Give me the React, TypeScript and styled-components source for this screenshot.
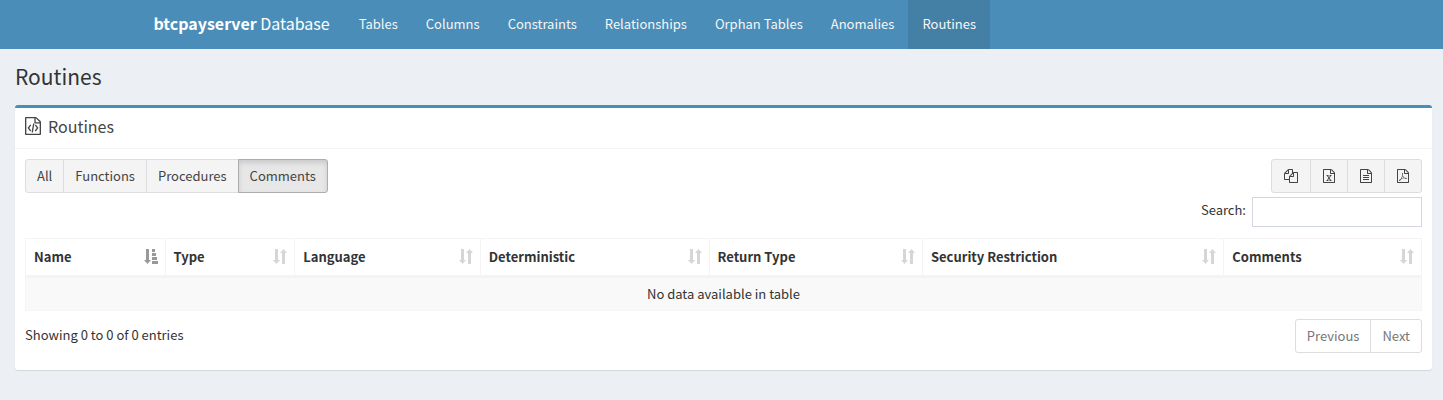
import React from "react";
import styled, { createGlobalStyle, css } from "styled-components";

const GlobalStyle = createGlobalStyle`
  *, *::before, *::after { box-sizing: border-box; }
  body {
    margin: 0;
    background: #ecf0f5;
    color: #333;
    font-family: "Source Sans Pro", "Noto Sans CJK SC", "Noto Sans", sans-serif;
    font-size: 13px;
    line-height: 20px;
  }
  button, input { font: inherit; color: inherit; }
`;

const Navbar = styled.header`
  background: #4a8db8;
  color: #fff;
`;

const NavInner = styled.div`
  display: flex;
  max-width: 1170px;
  margin: 0 auto;
  padding: 0 2px;
`;

const Brand = styled.a`
  padding: 13px 15px 16px;
  color: #fff;
  font-size: 16px;
  text-decoration: none;
  white-space: nowrap;
`;

const NavList = styled.nav`
  display: flex;
`;

const NavLink = styled.a<{ $active?: boolean }>`
  padding: 14px 14px 15px;
  color: #f6f6f6;
  text-decoration: none;
  white-space: nowrap;
  ${({ $active }) => $active && css`background: #447fa6;`}
`;

const Content = styled.main`
  padding: 14px 11px 15px 15px;
`;

const PageTitle = styled.h1`
  margin: 0 0 16px;
  font-size: 21px;
  font-weight: 400;
  line-height: 26px;
`;

const Box = styled.section`
  background: #fff;
  border-top: 3px solid #4a8db8;
  border-radius: 3px;
  box-shadow: 0 1px 1px rgba(0, 0, 0, 0.1);
`;

const BoxHeader = styled.header`
  display: flex;
  align-items: center;
  gap: 7px;
  padding: 8px 10px 12px;
  border-bottom: 1px solid #f4f4f4;
  color: #444;
`;

const BoxTitle = styled.h3`
  margin: 0;
  font-size: 16px;
  font-weight: 400;
  line-height: 20px;
`;

const BoxBody = styled.div`
  padding: 10px 10px 17px;
`;

const Toolbar = styled.div`
  display: flex;
  justify-content: space-between;
`;

const ButtonGroup = styled.div`
  display: flex;
`;

const Button = styled.button<{ $active?: boolean }>`
  display: flex;
  align-items: center;
  height: 34px;
  padding: 6px 11px;
  border: 1px solid #ddd;
  background: #f4f4f4;
  color: #444;
  white-space: nowrap;
  & + & { margin-left: -1px; }
  &:first-child { border-radius: 3px 0 0 3px; }
  &:last-child { border-radius: 0 3px 3px 0; }
  ${({ $active }) =>
    $active &&
    css`
      z-index: 1;
      border-color: #adadad;
      background: #e7e7e7;
      box-shadow: inset 0 3px 5px rgba(0, 0, 0, 0.125);
    `}
`;

const IconButton = styled(Button)`
  padding: 6px 12px;
`;

const PageButton = styled(Button)`
  background: #fff;
  color: #777;
`;

const SearchLabel = styled.label`
  display: flex;
  justify-content: flex-end;
  align-items: flex-start;
  gap: 6px;
  margin: 4px 0 11px;
  line-height: 26px;
`;

const SearchInput = styled.input`
  width: 170px;
  height: 30px;
  padding: 5px 10px;
  border: 1px solid #d2d6de;
  background: #fff;
`;

const Table = styled.table`
  width: 100%;
  table-layout: fixed;
  border-collapse: separate;
  border-spacing: 0;
  border: 1px solid #f4f4f4;
`;

const HeadCell = styled.th<{ $width: string }>`
  width: ${({ $width }) => $width};
  padding: 8px 6px 8px 8px;
  border-right: 1px solid #f4f4f4;
  border-bottom: 3px solid #f4f4f4;
  text-align: left;
  font-weight: 700;
  white-space: nowrap;
  &:last-child { border-right: 0; }
`;

const HeadContent = styled.div`
  display: flex;
  align-items: center;
  justify-content: space-between;
`;

const EmptyCell = styled.td`
  padding: 6px 8px;
  background: #f9f9f9;
  text-align: center;
`;

const Footer = styled.footer`
  display: flex;
  justify-content: space-between;
  align-items: flex-start;
  padding-top: 8px;
`;

const Summary = styled.span`
  line-height: 32px;
`;

const filePage =
  "M1468 380q28 28 48 76t20 88v1152q0 40-28 68t-68 28h-1344q-40 0-68-28t-28-68v-1600q0-40 28-68t68-28h896q40 0 88 20t76 48zm-444-244v376h376q-10-29-22-41l-313-313q-12-12-41-22zm384 1528v-1024h-416q-40 0-68-28t-28-68v-416h-768v1536h1280z";

const icons = {
  code: filePage +
    "m-928-896q8-11 21-12.5t24 6.5l51 38q11 8 12.5 21t-6.5 24l-182 243 182 243q8 11 6.5 24t-12.5 21l-51 38q-11 8-24 6.5t-21-12.5l-226-301q-14-19 0-38zm802 301q14 19 0 38l-226 301q-8 11-21 12.5t-24-6.5l-51-38q-11-8-12.5-21t6.5-24l182-243-182-243q-8-11-6.5-24t12.5-21l51-38q11-8 24-6.5t21 12.5zm-620 461q-13-2-20.5-13t-5.5-24l138-831q2-13 13-20.5t24-5.5l63 10q13 2 20.5 13t5.5 24l-138 831q-2 13-13 20.5t-24 5.5z",
  text: filePage +
    "m-1024-864q0-14 9-23t23-9h704q14 0 23 9t9 23v64q0 14-9 23t-23 9h-704q-14 0-23-9t-9-23v-64zm736 224q14 0 23 9t9 23v64q0 14-9 23t-23 9h-704q-14 0-23-9t-9-23v-64q0-14 9-23t23-9h704zm0 256q14 0 23 9t9 23v64q0 14-9 23t-23 9h-704q-14 0-23-9t-9-23v-64q0-14 9-23t23-9h704z",
  excel: filePage +
    "m-979-234v106h281v-106h-75l103-161q5-7 10-16.5t7.5-13.5 3.5-4h2q1 4 5 10 2 4 4.5 7.5t6 8 6.5 8.5l107 161h-76v106h291v-106h-68l-192-273 195-282h67v-107h-279v107h74l-103 159q-4 7-10 16.5t-9 13.5l-2 3h-2q-1-4-5-10-6-11-17-23l-106-159h76v-107h-290v107h68l189 272-194 283h-68z",
  pdf: filePage +
    "m-514-593q33 26 84 56 59-7 117-7 147 0 177 49 16 22 2 52 0 1-1 2l-2 2v1q-6 38-71 38-48 0-115-20t-130-53q-221 24-392 83-153 262-242 262-15 0-28-7l-24-12q-1-1-6-5-10-10-6-36 9-40 56-91.5t132-96.5q14-9 23 6 2 2 2 4 52-85 107-197 68-136 104-262-24-82-30.5-159.5t6.5-127.5q11-40 42-40h22q23 0 35 15 18 21 9 68-2 6-4 8 1 3 1 8v30q-2 123-14 192 55 164 146 238zm-576 411q52-24 137-158-51 40-87.5 84t-49.5 74zm398-920q-15 42-2 132 1-7 7-44 0-3 7-43 1-4 4-8-1-1-1-2-1-2-1-3-1-22-13-36 0 1-1 2v2zm-124 661q135-54 284-81-2-1-13-9.5t-16-13.5q-76-67-127-176-27 86-83 197-30 56-45 83zm646-16q-24-24-140-24 76 28 124 28 14 0 18-1 0-1-2-3z",
  copy:
    "M1696 384q40 0 68 28t28 68v1216q0 40-28 68t-68 28h-960q-40 0-68-28t-28-68v-288h-544q-40 0-68-28t-28-68v-672q0-40 20-88t48-76l408-408q28-28 76-48t88-20h416q40 0 68 28t28 68v328q68-40 128-40h416zm-544 213l-299 299h299v-299zm-640-384l-299 299h299v-299zm196 647l316-316v-416h-384v416q0 40-28 68t-68 28h-416v640h512v-256q0-40 20-88t48-76zm956 804v-1152h-384v416q0 40-28 68t-68 28h-416v640h896z",
};

const FileIcon = ({ name, size = 14 }: { name: keyof typeof icons; size?: number }) => {
  const units = name === "copy" ? 1792 : 1536;
  return (
    <svg width={Math.ceil((size * units) / 1792)} height={size} viewBox={`0 0 ${units} 1792`} preserveAspectRatio="none" fill="currentColor" aria-hidden="true">
      <path d={icons[name]} />
    </svg>
  );
};

const SortIcon = ({ active }: { active?: boolean }) => (
  <svg width="15" height="16" viewBox="0 0 15 16" fill={active ? "#999" : "#d6d6d6"} aria-hidden="true">
    <path d="M2 0h3v11h2l-3.500 4-3.500-4h2z" />
    {active ? (
      <path d="M8 0h3v3h-3zM8 4h4v3h-4zM8 8h5v3h-5zM8 12h6v3h-6z" />
    ) : (
      <path d="M9 15h3v-11h2l-3.500-4-3.500 4h2z" />
    )}
  </svg>
);

const navItems = ["Tables", "Columns", "Constraints", "Relationships", "Orphan Tables", "Anomalies", "Routines"];
const filters = ["All", "Functions", "Procedures", "Comments"];
const exportsList: { name: keyof typeof icons; label: string }[] = [
  { name: "copy", label: "Copy" },
  { name: "excel", label: "Excel" },
  { name: "text", label: "CSV" },
  { name: "pdf", label: "PDF" },
];
const columns = [
  { name: "Name", width: "10%" },
  { name: "Type", width: "9.3%" },
  { name: "Language", width: "13.3%" },
  { name: "Deterministic", width: "16.4%" },
  { name: "Return Type", width: "15.3%" },
  { name: "Security Restriction", width: "21.6%" },
  { name: "Comments", width: "14.1%" },
];

export default function App() {
  return (
    <>
      <GlobalStyle />
      <Navbar>
        <NavInner>
          <Brand href="#"><b>btcpayserver</b> Database</Brand>
          <NavList>
            {navItems.map((item) => (
              <NavLink key={item} href="#" $active={item === "Routines"}>{item}</NavLink>
            ))}
          </NavList>
        </NavInner>
      </Navbar>
      <Content>
        <PageTitle>Routines</PageTitle>
        <Box>
          <BoxHeader>
            <FileIcon name="code" size={18} />
            <BoxTitle>Routines</BoxTitle>
          </BoxHeader>
          <BoxBody>
            <Toolbar>
              <ButtonGroup>
                {filters.map((f) => (
                  <Button key={f} type="button" $active={f === "Comments"}>{f}</Button>
                ))}
              </ButtonGroup>
              <ButtonGroup>
                {exportsList.map((e) => (
                  <IconButton key={e.name} type="button" aria-label={e.label}><FileIcon name={e.name} /></IconButton>
                ))}
              </ButtonGroup>
            </Toolbar>
            <SearchLabel>
              Search:
              <SearchInput type="search" />
            </SearchLabel>
            <Table>
              <thead>
                <tr>
                  {columns.map((c, i) => (
                    <HeadCell key={c.name} $width={c.width} scope="col">
                      <HeadContent>{c.name}<SortIcon active={i === 0} /></HeadContent>
                    </HeadCell>
                  ))}
                </tr>
              </thead>
              <tbody>
                <tr>
                  <EmptyCell colSpan={columns.length}>No data available in table</EmptyCell>
                </tr>
              </tbody>
            </Table>
            <Footer>
              <Summary>Showing 0 to 0 of 0 entries</Summary>
              <ButtonGroup>
                <PageButton type="button">Previous</PageButton>
                <PageButton type="button">Next</PageButton>
              </ButtonGroup>
            </Footer>
          </BoxBody>
        </Box>
      </Content>
    </>
  );
}
